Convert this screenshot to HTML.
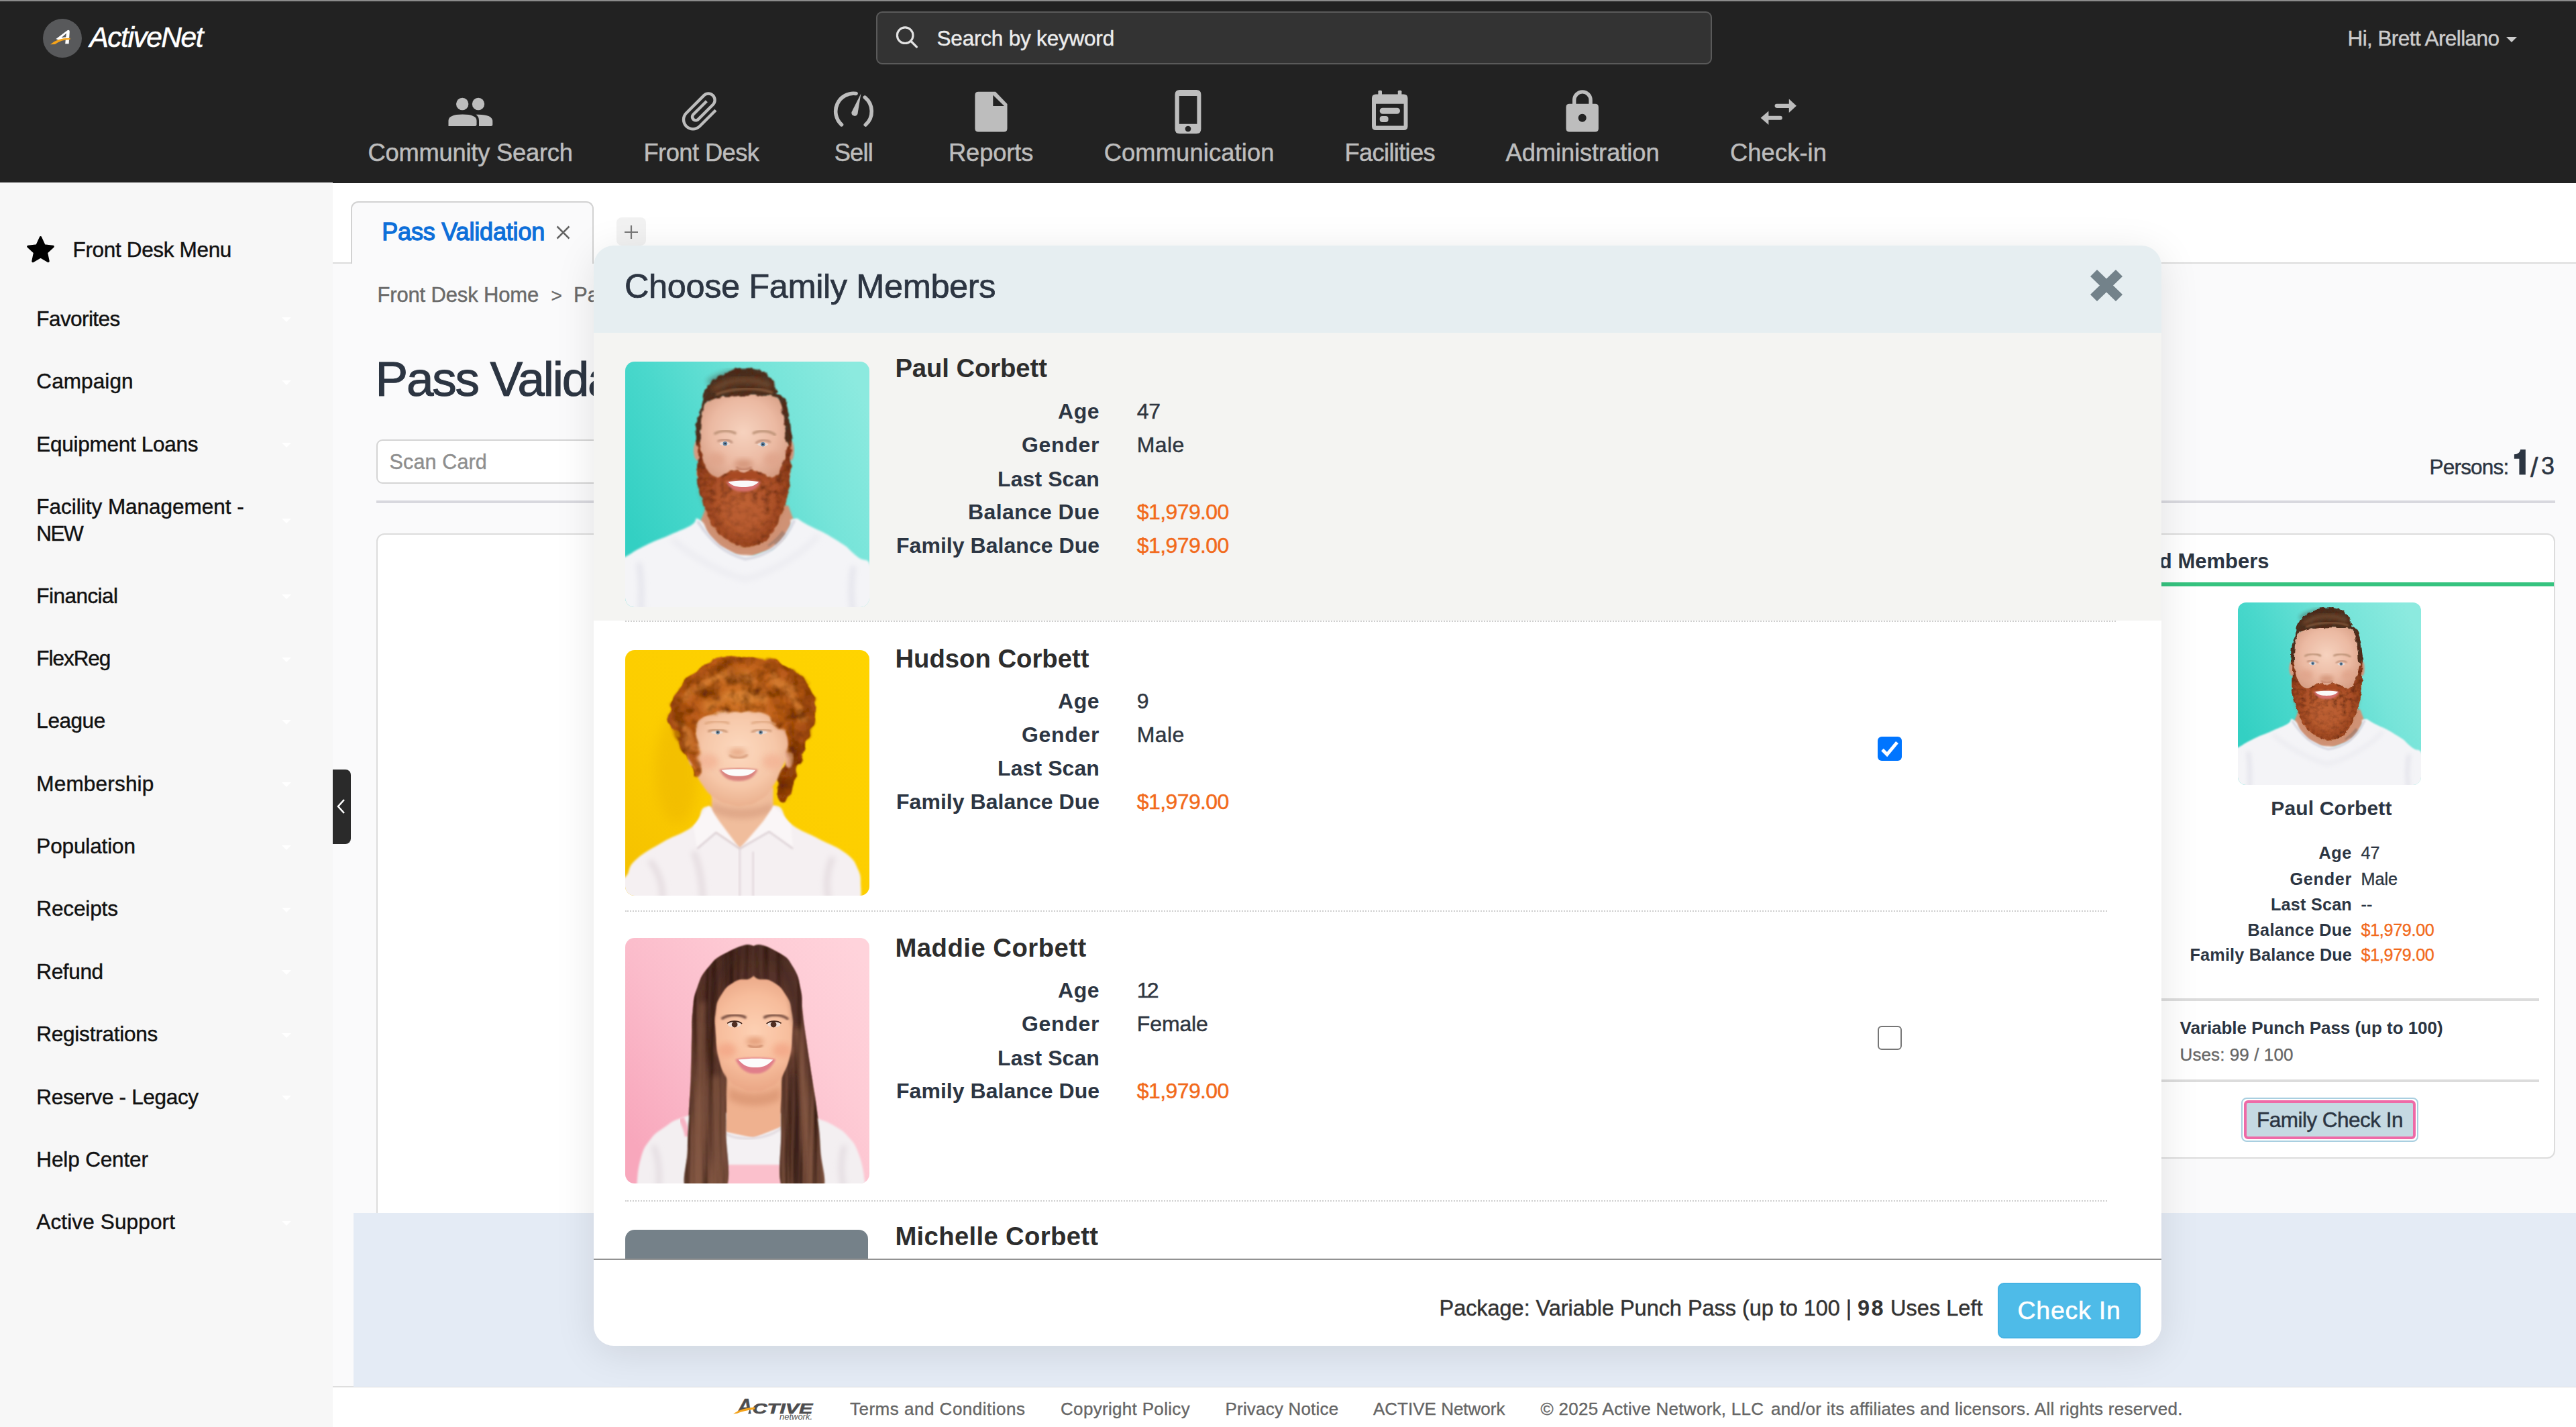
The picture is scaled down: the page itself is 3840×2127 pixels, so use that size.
<!DOCTYPE html>
<html lang="en"><head><meta charset="utf-8"><title>ActiveNet - Pass Validation</title>
<style>
html,body{margin:0;padding:0;}
body{width:3840px;height:2127px;overflow:hidden;background:#fff;font-family:"Liberation Sans",sans-serif;position:relative;}
.t{position:absolute;white-space:pre;line-height:1;}
.b{position:absolute;box-sizing:border-box;}
svg{position:absolute;overflow:visible;}
</style></head><body>
<div class="b" style="left:0;top:0;width:3840px;height:273px;background:#222;"></div>
<div class="b" style="left:0;top:0;width:3840px;height:1.5px;background:#8c8c8c;"></div>
<div class="b" style="left:0;top:272px;width:496px;height:1855px;background:#f7f7f7;"></div>
<div class="b" style="left:496px;top:391px;width:3344px;height:1676px;background:#fafafb;border-top:2px solid #dcdcdc;"></div>
<div class="b" style="left:496px;top:2066px;width:3344px;height:61px;background:#fff;border-top:2px solid #dedede;"></div>
<svg style="left:64px;top:28px" width="58" height="58" viewBox="0 0 58 58"><circle cx="29" cy="29" r="29" fill="#58595b"/><path d="M19.5 30 L36.5 17.2 Q39.5 15.8 39.8 19 L38.6 37.3 L33.2 37.3 L33.8 31.2 Q28 30.8 24 32 Z M34.2 27.6 L35 21.5 L27.5 28.3 Q31 27.4 34.2 27.6Z" fill="#fff" fill-rule="evenodd"/><path d="M11 38.3 Q21 28.4 40.7 28.7 L40.4 30.9 Q27 31 18 38 Z" fill="#f5a31a"/></svg>
<span class="t" style="left:133.5px;top:34.5px;font-size:42.5px;font-style:italic;letter-spacing:-1.49px;-webkit-text-stroke:0.59px;color:#fff;">ActiveNet</span>
<div class="b" style="left:1306px;top:17px;width:1246px;height:79px;background:#333;border:2px solid #5a5a5a;border-radius:9px;"></div>
<svg style="left:1334px;top:38px" width="36" height="36" viewBox="0 0 36 36"><circle cx="15.2" cy="14.7" r="11.8" fill="none" stroke="#e2e2e2" stroke-width="3.2"/><path d="M23.8 23.3 L32.4 31.9" stroke="#e2e2e2" stroke-width="3.4" stroke-linecap="round"/></svg>
<span class="t" style="left:1396.5px;top:41.6px;font-size:31.5px;letter-spacing:-0.20px;-webkit-text-stroke:0.44px;color:#ececec;">Search by keyword</span>
<span class="t" style="left:3499.5px;top:41.8px;font-size:31.5px;letter-spacing:-0.58px;-webkit-text-stroke:0.44px;color:#ccc;">Hi, Brett Arellano</span>
<svg style="left:3736px;top:55px" width="16" height="8" viewBox="0 0 16 8"><path d="M0 0h16l-8 8z" fill="#ccc"/></svg>
<span class="t" style="left:548.6px;top:210.1px;font-size:36.3px;letter-spacing:-0.22px;-webkit-text-stroke:0.51px;color:#bdbdbd;">Community Search</span>
<span class="t" style="left:959.5px;top:210.1px;font-size:36.3px;letter-spacing:-0.56px;-webkit-text-stroke:0.51px;color:#bdbdbd;">Front Desk</span>
<span class="t" style="left:1243.7px;top:210.1px;font-size:36.3px;letter-spacing:-0.81px;-webkit-text-stroke:0.51px;color:#bdbdbd;">Sell</span>
<span class="t" style="left:1414.0px;top:210.1px;font-size:36.3px;letter-spacing:-0.10px;-webkit-text-stroke:0.51px;color:#bdbdbd;">Reports</span>
<span class="t" style="left:1645.7px;top:210.1px;font-size:36.3px;letter-spacing:0.13px;-webkit-text-stroke:0.51px;color:#bdbdbd;">Communication</span>
<span class="t" style="left:2004.5px;top:210.1px;font-size:36.3px;letter-spacing:-0.67px;-webkit-text-stroke:0.51px;color:#bdbdbd;">Facilities</span>
<span class="t" style="left:2244.5px;top:210.1px;font-size:36.3px;letter-spacing:-0.07px;-webkit-text-stroke:0.51px;color:#bdbdbd;">Administration</span>
<span class="t" style="left:2579.0px;top:210.1px;font-size:36.3px;letter-spacing:0.10px;-webkit-text-stroke:0.51px;color:#bdbdbd;">Check-in</span>
<svg style="left:0;top:0" width="3840" height="272" viewBox="0 0 3840 272"><g fill="#bdbdbd"><circle cx="689.2" cy="155" r="9.2"/><circle cx="713" cy="155" r="9.2"/><path d="M668.5 188 V180 Q668.5 170.5 689.5 170.5 Q710.5 170.5 710.5 180 V185.5 Q710.5 188 708 188 H671 Q668.5 188 668.5 188Z"/><path d="M714 188 V180 Q714 174 709.5 170.8 Q734.3 170 734.3 181 V185.5 Q734.3 188 731.8 188Z"/><path d="M1458.4 136.8 H1484 L1501.5 155 V191.6 Q1501.5 196.6 1496.5 196.6 H1458.4 Q1453.4 196.6 1453.4 191.6 V141.8 Q1453.4 136.8 1458.4 136.8Z M1480.3 141.7 V158 H1497Z" fill-rule="evenodd"/><path d="M1758.5 134.1 H1783.4 Q1790.4 134.1 1790.4 141.1 V192.3 Q1790.4 199.3 1783.4 199.3 H1758.5 Q1751.5 199.3 1751.5 192.3 V141.1 Q1751.5 134.1 1758.5 134.1Z M1757.8 143.1 V184.7 H1784.4 V143.1Z M1771 187.7 a4.3 4.3 0 1 0 0.01 0Z" fill-rule="evenodd"/><path d="M2051 140.4 H2092.5 Q2098.5 140.4 2098.5 146.4 V188 Q2098.5 194 2092.5 194 H2051 Q2045 194 2045 188 V146.4 Q2045 140.4 2051 140.4Z M2051 154.8 V187.4 H2092.6 V154.8Z" fill-rule="evenodd"/><rect x="2054.4" y="134.8" width="5.6" height="9" rx="1.5"/><rect x="2083.8" y="134.8" width="5.6" height="9" rx="1.5"/><rect x="2056.7" y="160.8" width="30.3" height="8.9" rx="4.4"/><rect x="2056.7" y="173" width="12.9" height="9" rx="4"/><path d="M2339.5 154.8 H2377.9 Q2382.9 154.8 2382.9 159.8 V191.6 Q2382.9 196.6 2377.9 196.6 H2339.5 Q2334.5 196.6 2334.5 191.6 V159.8 Q2334.5 154.8 2339.5 154.8Z M2358.7 169.7 a6 6 0 1 0 0.01 0Z" fill-rule="evenodd"/><path d="M2666.8 147.6 L2677.9 157.8 L2666.8 168 V160.9 H2648.6 a3.05 3.05 0 0 1 0 -6.1 H2666.8Z"/><path d="M2636.4 165.5 L2624.6 175.7 L2636.4 186 V178.8 H2653.8 a3.05 3.05 0 0 0 0 -6.1 H2636.4Z"/></g><path d="M2346.7 157 V149.1 a12.2 12.2 0 0 1 24.4 0 V157" fill="none" stroke="#bdbdbd" stroke-width="5.4"/><g transform="translate(1044.5 166.9) rotate(45) scale(2.95) translate(-12.5 -12)" fill="#bdbdbd"><path d="M16.5 6v11.5c0 2.21-1.79 4-4 4s-4-1.79-4-4V5c0-1.38 1.12-2.5 2.5-2.5s2.5 1.12 2.5 2.5v10.5c0 .55-.45 1-1 1s-1-.45-1-1V6H10v9.5c0 1.38 1.12 2.5 2.5 2.5s2.5-1.12 2.5-2.5V5c0-2.21-1.79-4-4-4S7 2.79 7 5v12.5c0 3.04 2.46 5.5 5.5 5.5s5.5-2.46 5.5-5.5V6h-1.5z"/></g><path d="M1254.5 185.85 A26.8 26.8 0 0 1 1276.1 139.45" fill="none" stroke="#bdbdbd" stroke-width="5.6" stroke-linecap="round"/><path d="M1289.3 145.1 A26.8 26.8 0 0 1 1290.3 186" fill="none" stroke="#bdbdbd" stroke-width="5.6" stroke-linecap="round"/><path d="M1283.4 139.6 L1278.4 170 A4.7 4.7 0 0 1 1269.5 167.1 Z" fill="#bdbdbd"/></svg>
<svg style="left:0;top:0" width="120" height="420" viewBox="0 0 120 420"><path d="M60.5 353.9 L66.0 366.0 L79.1 367.4 L69.3 376.4 L72.0 389.4 L60.5 382.8 L49.0 389.4 L51.7 376.4 L41.9 367.4 L55.0 366.0Z" fill="#000" stroke="#000" stroke-width="3.5" stroke-linejoin="round"/></svg>
<span class="t" style="left:108.5px;top:356.5px;font-size:31.5px;letter-spacing:-0.34px;-webkit-text-stroke:0.44px;color:#111;">Front Desk Menu</span>
<span class="t" style="left:54.3px;top:459.7px;font-size:31.5px;letter-spacing:-0.58px;-webkit-text-stroke:0.44px;color:#111;">Favorites</span>
<svg style="left:420px;top:473px" width="14" height="7" viewBox="0 0 14 7"><path d="M0 0h14l-7 7z" fill="#fff"/></svg>
<span class="t" style="left:54.3px;top:553.3px;font-size:31.5px;letter-spacing:0.09px;-webkit-text-stroke:0.44px;color:#111;">Campaign</span>
<svg style="left:420px;top:567px" width="14" height="7" viewBox="0 0 14 7"><path d="M0 0h14l-7 7z" fill="#fff"/></svg>
<span class="t" style="left:54.3px;top:646.5px;font-size:31.5px;letter-spacing:-0.28px;-webkit-text-stroke:0.44px;color:#111;">Equipment Loans</span>
<svg style="left:420px;top:660px" width="14" height="7" viewBox="0 0 14 7"><path d="M0 0h14l-7 7z" fill="#fff"/></svg>
<span class="t" style="left:54.3px;top:739.6px;font-size:31.5px;letter-spacing:-0.02px;-webkit-text-stroke:0.44px;color:#111;">Facility Management -</span>
<span class="t" style="left:54.3px;top:779.5px;font-size:31.5px;letter-spacing:-1.50px;-webkit-text-stroke:0.44px;color:#111;">NEW</span>
<span class="t" style="left:54.3px;top:872.6px;font-size:31.5px;letter-spacing:-0.54px;-webkit-text-stroke:0.44px;color:#111;">Financial</span>
<svg style="left:420px;top:886px" width="14" height="7" viewBox="0 0 14 7"><path d="M0 0h14l-7 7z" fill="#fff"/></svg>
<span class="t" style="left:54.3px;top:965.8px;font-size:31.5px;letter-spacing:-1.04px;-webkit-text-stroke:0.44px;color:#111;">FlexReg</span>
<svg style="left:420px;top:980px" width="14" height="7" viewBox="0 0 14 7"><path d="M0 0h14l-7 7z" fill="#fff"/></svg>
<span class="t" style="left:54.3px;top:1059.2px;font-size:31.5px;letter-spacing:-0.44px;-webkit-text-stroke:0.44px;color:#111;">League</span>
<svg style="left:420px;top:1073px" width="14" height="7" viewBox="0 0 14 7"><path d="M0 0h14l-7 7z" fill="#fff"/></svg>
<span class="t" style="left:54.3px;top:1152.6px;font-size:31.5px;letter-spacing:0.19px;-webkit-text-stroke:0.44px;color:#111;">Membership</span>
<svg style="left:420px;top:1166px" width="14" height="7" viewBox="0 0 14 7"><path d="M0 0h14l-7 7z" fill="#fff"/></svg>
<span class="t" style="left:54.3px;top:1246.0px;font-size:31.5px;letter-spacing:-0.14px;-webkit-text-stroke:0.44px;color:#111;">Population</span>
<svg style="left:420px;top:1260px" width="14" height="7" viewBox="0 0 14 7"><path d="M0 0h14l-7 7z" fill="#fff"/></svg>
<span class="t" style="left:54.3px;top:1339.4px;font-size:31.5px;letter-spacing:-0.13px;-webkit-text-stroke:0.44px;color:#111;">Receipts</span>
<svg style="left:420px;top:1353px" width="14" height="7" viewBox="0 0 14 7"><path d="M0 0h14l-7 7z" fill="#fff"/></svg>
<span class="t" style="left:54.3px;top:1432.8px;font-size:31.5px;letter-spacing:-0.36px;-webkit-text-stroke:0.44px;color:#111;">Refund</span>
<svg style="left:420px;top:1446px" width="14" height="7" viewBox="0 0 14 7"><path d="M0 0h14l-7 7z" fill="#fff"/></svg>
<span class="t" style="left:54.3px;top:1526.2px;font-size:31.5px;letter-spacing:-0.24px;-webkit-text-stroke:0.44px;color:#111;">Registrations</span>
<svg style="left:420px;top:1540px" width="14" height="7" viewBox="0 0 14 7"><path d="M0 0h14l-7 7z" fill="#fff"/></svg>
<span class="t" style="left:54.3px;top:1619.6px;font-size:31.5px;letter-spacing:-0.34px;-webkit-text-stroke:0.44px;color:#111;">Reserve - Legacy</span>
<svg style="left:420px;top:1633px" width="14" height="7" viewBox="0 0 14 7"><path d="M0 0h14l-7 7z" fill="#fff"/></svg>
<span class="t" style="left:54.3px;top:1713.0px;font-size:31.5px;letter-spacing:-0.14px;-webkit-text-stroke:0.44px;color:#111;">Help Center</span>
<span class="t" style="left:54.3px;top:1806.4px;font-size:31.5px;letter-spacing:0.14px;-webkit-text-stroke:0.44px;color:#111;">Active Support</span>
<svg style="left:420px;top:1820px" width="14" height="7" viewBox="0 0 14 7"><path d="M0 0h14l-7 7z" fill="#fff"/></svg>
<svg style="left:420px;top:773px" width="14" height="7" viewBox="0 0 14 7"><path d="M0 0h14l-7 7z" fill="#fff"/></svg>
<div class="b" style="left:496px;top:1147px;width:27px;height:111px;background:#2a2a2a;border-radius:0 8px 8px 0;"></div>
<svg style="left:501px;top:1190px" width="14" height="24" viewBox="0 0 14 24"><path d="M12 2 L3 12 L12 22" fill="none" stroke="#fff" stroke-width="2.5"/></svg>
<div class="b" style="left:523px;top:300px;width:362px;height:93px;background:#fafafb;border:2px solid #d2d2d2;border-bottom:none;border-radius:11px 11px 0 0;"></div>
<span class="t" style="left:569.2px;top:327.7px;font-size:36px;letter-spacing:-0.17px;color:#0d6fd9;-webkit-text-stroke:1.3px #0d6fd9;">Pass Validation</span>
<svg style="left:829px;top:336px" width="21" height="21" viewBox="0 0 21 21"><path d="M1.5 1.5L19.5 19.5M19.5 1.5L1.5 19.5" stroke="#666" stroke-width="2.5" fill="none"/></svg>
<div class="b" style="left:919px;top:324px;width:44px;height:42px;background:#f2f2f2;border-radius:8px;"></div>
<svg style="left:931px;top:336px" width="20" height="20" viewBox="0 0 20 20"><path d="M10 0V20M0 10H20" stroke="#777" stroke-width="2.2" fill="none"/></svg>
<span class="t" style="left:562.5px;top:424.3px;font-size:31px;letter-spacing:-0.16px;-webkit-text-stroke:0.43px;color:#6a6a6a;">Front Desk Home</span>
<span class="t" style="left:821.5px;top:426.8px;font-size:28px;-webkit-text-stroke:0.39px;color:#6a6a6a;">&gt;</span>
<span class="t" style="left:855.0px;top:424.3px;font-size:31px;-webkit-text-stroke:0.43px;color:#6a6a6a;">Pass Validation</span>
<span class="t" style="left:559.5px;top:527.9px;font-size:73px;-webkit-text-stroke:1.02px;color:#2c3542;letter-spacing:-2.3px;">Pass Validation</span>
<div class="b" style="left:561px;top:655px;width:700px;height:66px;background:#fff;border:2px solid #d4d4d4;border-radius:9px;"></div>
<span class="t" style="left:580.5px;top:672.6px;font-size:30.5px;letter-spacing:0.15px;-webkit-text-stroke:0.43px;color:#8e8e8e;">Scan Card</span>
<div class="b" style="left:561px;top:746px;width:3248px;height:4px;background:#d8d8de;"></div>
<div class="b" style="left:561px;top:795px;width:2560px;height:1060px;background:#fff;border:2px solid #dcdcdc;border-radius:12px;"></div>
<div class="b" style="left:3100px;top:795px;width:709px;height:932px;background:#fff;border:2px solid #dcdcdc;border-radius:12px;"></div>
<span class="t" style="left:3108.6px;top:821.0px;font-size:31px;font-weight:700;color:#2c3542;">Scanned Members</span>
<div class="b" style="left:3102px;top:868px;width:705px;height:6px;background:#36c37f;"></div>
<svg style="left:3336.0px;top:898.0px;overflow:hidden" width="273" height="272" viewBox="45 35 1332 1339" preserveAspectRatio="none"><defs><clipPath id="c1"><rect x="45" y="35" width="1332" height="1339" rx="59"/></clipPath><filter id="f1" x="-10%" y="-10%" width="120%" height="120%"><feGaussianBlur stdDeviation="5"/></filter><filter id="g1" x="-30%" y="-30%" width="160%" height="160%"><feGaussianBlur stdDeviation="16"/></filter><filter id="h1" x="-40%" y="-40%" width="180%" height="180%"><feGaussianBlur stdDeviation="34"/></filter><filter id="v1" x="-10%" y="-10%" width="120%" height="120%"><feTurbulence type="fractalNoise" baseFrequency="0.03" numOctaves="2" seed="5" result="n"/><feDisplacementMap in="SourceGraphic" in2="n" scale="26" xChannelSelector="R" yChannelSelector="G" result="d"/><feTurbulence type="fractalNoise" baseFrequency="0.03" numOctaves="3" seed="11" result="t"/><feColorMatrix in="t" type="matrix" values="0 0 0 0 0  0 0 0 0 0  0 0 0 0 0  1.8 0 0 0 -0.7" result="ta"/><feFlood flood-color="#5a2510" result="fl"/><feComposite in="fl" in2="ta" operator="in" result="dk"/><feComposite in="dk" in2="d" operator="in" result="dk2"/><feMerge><feMergeNode in="d"/><feMergeNode in="dk2"/></feMerge><feGaussianBlur stdDeviation="3"/></filter><filter id="s1" x="-5%" y="-5%" width="110%" height="110%"><feTurbulence type="fractalNoise" baseFrequency="0.03 0.0012" numOctaves="3" seed="4" result="t"/><feColorMatrix in="t" type="matrix" values="0 0 0 0 0  0 0 0 0 0  0 0 0 0 0  2.6 0 0 0 -1.0" result="ta"/><feFlood flood-color="#351c14" result="fl"/><feComposite in="fl" in2="ta" operator="in" result="dk"/><feComposite in="dk" in2="SourceGraphic" operator="in" result="dk2"/><feMerge><feMergeNode in="SourceGraphic"/><feMergeNode in="dk2"/></feMerge><feGaussianBlur stdDeviation="3.5"/></filter><filter id="w1" x="-10%" y="-10%" width="120%" height="120%"><feTurbulence type="fractalNoise" baseFrequency="0.011" numOctaves="2" seed="3" result="n"/><feDisplacementMap in="SourceGraphic" in2="n" scale="75" xChannelSelector="R" yChannelSelector="G" result="d"/><feTurbulence type="fractalNoise" baseFrequency="0.016" numOctaves="3" seed="8" result="t"/><feColorMatrix in="t" type="matrix" values="0 0 0 0 0  0 0 0 0 0  0 0 0 0 0  2.1 0 0 0 -0.8" result="ta"/><feFlood flood-color="#6a2c08" result="fl"/><feComposite in="fl" in2="ta" operator="in" result="dk"/><feComposite in="dk" in2="d" operator="in" result="dk2"/><feMerge><feMergeNode in="d"/><feMergeNode in="dk2"/></feMerge><feGaussianBlur stdDeviation="3.5"/></filter><linearGradient id="bg1" gradientUnits="userSpaceOnUse" x1="45" y1="900" x2="1377" y2="300"><stop offset="0" stop-color="#33d0c3"/><stop offset=".3" stop-color="#4ad8cc"/><stop offset=".7" stop-color="#76e4d9"/><stop offset="1" stop-color="#8ceadf"/></linearGradient><radialGradient id="sk1" gradientUnits="userSpaceOnUse" cx="690" cy="420" r="300"><stop offset="0" stop-color="#f6d2be"/><stop offset=".6" stop-color="#ebb9a2"/><stop offset="1" stop-color="#d49a80"/></radialGradient><radialGradient id="bd1" gradientUnits="userSpaceOnUse" cx="690" cy="800" r="330"><stop offset="0" stop-color="#bd6034"/><stop offset=".6" stop-color="#aa4f28"/><stop offset="1" stop-color="#86391b"/></radialGradient></defs><g clip-path="url(#c1)"><rect x="0" y="0" width="1427" height="1427" fill="url(#bg1)"/><path d="M490 820L935 820L962 895L900 1040L700 1110L520 1040L455 905Z" fill="#cf9275" filter="url(#f1)"/><path d="M-20 1130C2 1017 -12 1130 45 1100C102 1070 65 1082 150 1040C235 998 217 1012 300 975C383 938 349 956 400 930C451 904 412 875 452 898C492 921 471 946 520 1000C569 1054 540 1030 600 1060C660 1090 633 1085 700 1090C767 1095 740 1095 800 1075C860 1055 833 1072 880 1030C927 988 913 996 940 950C967 904 925 900 962 893C999 886 971 891 1050 930C1129 969 1117 957 1200 1010C1283 1063 1233 1030 1300 1090C1367 1150 1360 1073 1400 1190C1440 1307 1893 1357 1420 1440C947 1523 460 1543 -20 1440C-500 1337 -42 1243 -20 1130Z" fill="#f4f4f7" filter="url(#f1)"/><path d="M440 905 C520 1030 600 1085 700 1112 C800 1100 900 1050 968 900" fill="none" stroke="#d9d9e2" stroke-width="16" filter="url(#f1)"/><path d="M120 1130 C140 1250 130 1340 130 1430 M1290 1150 C1270 1260 1280 1350 1290 1430" stroke="#e2e2ea" stroke-width="26" fill="none" filter="url(#g1)"/><path d="M300 1000 C400 1100 600 1200 700 1220 C800 1200 1000 1100 1100 980" stroke="#ececf1" stroke-width="30" fill="none" filter="url(#g1)"/><ellipse cx="440" cy="520" rx="22" ry="55" fill="#d59a80" filter="url(#f1)"/><ellipse cx="948" cy="520" rx="18" ry="55" fill="#cf9277" filter="url(#f1)"/><path d="M450 420C455 333 439 362 462 300C485 238 474 263 520 235C566 207 540 224 600 215C660 206 633 209 700 208C767 207 743 206 800 212C857 218 832 196 870 225C908 254 895 235 915 300C935 365 923 333 930 420C937 507 945 467 935 560C925 653 978 633 900 700C822 767 840 760 700 760C560 760 564 767 480 700C396 633 458 653 448 560C438 467 445 507 450 420Z" fill="url(#sk1)" filter="url(#f1)"/><g filter="url(#v1)"><path d="M432 480C427 459 429 440 432 400C435 360 435 370 445 330C455 290 458 286 468 250C478 214 467 225 482 195C497 165 494 165 525 138C556 111 553 113 600 95C647 77 649 74 700 72C751 70 750 70 790 88C830 106 828 108 850 138C872 168 857 175 872 200C887 225 892 205 908 232C924 259 921 255 932 300C943 345 943 352 948 400C953 448 956 461 950 480C944 499 935 491 926 470C917 449 924 440 918 400C912 360 914 359 905 320C896 281 897 281 885 255C873 229 883 231 860 222C837 213 843 223 800 222C757 221 753 217 700 218C647 219 648 220 600 226C552 232 552 229 520 242C488 255 495 249 480 275C465 301 469 301 462 340C455 379 458 383 455 420C452 457 458 464 452 480C446 496 437 501 432 480Z" fill="#4b3023"/></g><path d="M520 190 C600 130 720 110 840 170" stroke="#7d5439" stroke-width="26" fill="none" filter="url(#g1)" opacity=".9"/><path d="M540 215 C620 180 760 170 850 205" stroke="#8a5e40" stroke-width="14" fill="none" filter="url(#f1)" opacity=".8"/><path d="M500 150 C560 105 650 85 730 90" stroke="#3f271a" stroke-width="18" fill="none" filter="url(#g1)" opacity=".7"/><g filter="url(#v1)"><path d="M445 470C440 481 442 512 440 560C438 608 435 602 438 650C441 698 439 692 450 740C461 788 461 782 480 830C499 878 493 877 520 920C547 963 545 961 580 990C615 1019 613 1016 650 1030C687 1044 683 1044 720 1042C757 1040 755 1043 790 1022C825 1001 823 1000 850 962C877 924 872 929 892 880C912 831 913 828 926 780C939 732 936 748 942 700C948 652 946 661 947 600C948 539 953 491 947 470C941 449 938 485 925 520C912 555 917 563 900 600C883 637 887 645 860 658C833 671 831 659 800 650C769 641 771 629 742 626C713 623 717 640 690 640C663 640 669 623 640 626C611 629 609 641 580 650C551 659 557 673 530 660C503 647 499 637 480 600C461 563 469 555 460 520C451 485 450 459 445 470Z" fill="url(#bd1)"/></g><ellipse cx="690" cy="880" rx="140" ry="120" fill="#bf6234" filter="url(#h1)" opacity=".55"/><path d="M470 720 C500 860 580 980 690 1020 M910 720 C890 860 810 980 700 1020" stroke="#94421f" stroke-width="30" fill="none" filter="url(#g1)" opacity=".6"/><path d="M560 690 C600 640 660 625 690 645 C720 625 790 640 830 690 C790 672 740 668 690 672 C640 668 600 672 560 690Z" fill="#a84a24" filter="url(#f1)"/><path d="M596 690 C650 678 740 678 784 690 C765 738 720 744 690 744 C660 744 615 738 596 690Z" fill="#d6706d" filter="url(#f1)"/><path d="M606 690 C660 682 730 682 774 690 C750 716 720 719 690 719 C660 719 630 716 606 690Z" fill="#fafafa"/><ellipse cx="690" cy="595" rx="52" ry="26" fill="#d5977c" filter="url(#g1)"/><path d="M650 610 C670 628 710 628 735 610" stroke="#b9765c" stroke-width="8" fill="none" filter="url(#f1)"/><ellipse cx="540" cy="570" rx="50" ry="40" fill="#e0a48b" filter="url(#g1)" opacity=".8"/><ellipse cx="850" cy="570" rx="50" ry="40" fill="#e0a48b" filter="url(#g1)" opacity=".8"/><ellipse cx="588" cy="482" rx="28" ry="11" fill="#e9d9d3"/><ellipse cx="796" cy="486" rx="28" ry="11" fill="#e9d9d3"/><circle cx="590" cy="482" r="12" fill="#6286a6"/><circle cx="796" cy="486" r="12" fill="#6286a6"/><circle cx="590" cy="482" r="5" fill="#2c3b4a"/><circle cx="796" cy="486" r="5" fill="#2c3b4a"/><path d="M548 470 C575 455 610 458 630 478 M756 480 C780 460 815 460 838 474" stroke="#9a6a52" stroke-width="6" fill="none" filter="url(#f1)"/><path d="M530 430 C570 405 620 410 650 428 M740 428 C770 408 830 408 866 436" stroke="#b88e72" stroke-width="12" fill="none" filter="url(#f1)"/><path d="M825 1040 C850 1020 880 1000 905 960 M860 1030 C880 1015 900 990 915 968" stroke="#6d625f" stroke-width="6" fill="none" opacity=".75" filter="url(#f1)"/></g></svg>
<span class="t" style="left:3385.2px;top:1189.7px;font-size:30px;font-weight:700;letter-spacing:0.18px;color:#2c3542;">Paul Corbett</span>
<span class="t" style="left:3456.5px;top:1259.2px;font-size:25.2px;font-weight:700;letter-spacing:0.64px;color:#2c3542;">Age</span>
<span class="t" style="left:3519.5px;top:1259.2px;font-size:25.2px;-webkit-text-stroke:0.35px;color:#2c3542;">47</span>
<span class="t" style="left:3413.5px;top:1297.8px;font-size:25.2px;font-weight:700;letter-spacing:0.72px;color:#2c3542;">Gender</span>
<span class="t" style="left:3519.5px;top:1297.8px;font-size:25.2px;-webkit-text-stroke:0.35px;color:#2c3542;">Male</span>
<span class="t" style="left:3385.0px;top:1336.1px;font-size:25.2px;font-weight:700;letter-spacing:0.22px;color:#2c3542;">Last Scan</span>
<span class="t" style="left:3519.5px;top:1336.1px;font-size:25.2px;-webkit-text-stroke:0.35px;color:#2c3542;">--</span>
<span class="t" style="left:3350.5px;top:1373.7px;font-size:25.2px;font-weight:700;letter-spacing:0.39px;color:#2c3542;">Balance Due</span>
<span class="t" style="left:3519.5px;top:1373.7px;font-size:25.2px;letter-spacing:-0.34px;-webkit-text-stroke:0.35px;color:#f26a1b;">$1,979.00</span>
<span class="t" style="left:3264.5px;top:1411.3px;font-size:25.2px;font-weight:700;letter-spacing:0.20px;color:#2c3542;">Family Balance Due</span>
<span class="t" style="left:3519.5px;top:1411.3px;font-size:25.2px;letter-spacing:-0.34px;-webkit-text-stroke:0.35px;color:#f26a1b;">$1,979.00</span>
<div class="b" style="left:3200px;top:1488px;width:585px;height:4px;background:#dcdcdc;"></div>
<span class="t" style="left:3249.5px;top:1519.4px;font-size:26px;font-weight:700;letter-spacing:-0.03px;color:#2c3542;">Variable Punch Pass (up to 100)</span>
<span class="t" style="left:3249.5px;top:1559.4px;font-size:26px;letter-spacing:0.10px;-webkit-text-stroke:0.36px;color:#666;">Uses: 99 / 100</span>
<div class="b" style="left:3200px;top:1609px;width:585px;height:4px;background:#dcdcdc;"></div>
<div class="b" style="left:3341px;top:1636px;width:264px;height:66px;background:#fff;border:2px solid #a9cfe0;border-radius:8px;"></div>
<div class="b" style="left:3345px;top:1640px;width:256px;height:58px;background:#c5d9e2;border:4px solid #ee6aa7;border-radius:6px;"></div>
<span class="t" style="left:3364.0px;top:1653.9px;font-size:31.5px;letter-spacing:-0.52px;-webkit-text-stroke:0.44px;color:#2c3542;">Family Check In</span>
<span class="t" style="left:3621.5px;top:681.3px;font-size:31.5px;letter-spacing:-0.79px;-webkit-text-stroke:0.44px;color:#2c3542;">Persons:</span>
<svg style="left:0;top:0" width="3840" height="720" viewBox="0 0 3840 720"><path d="M3757.2 670 H3764.8 V707.5 H3755.4 V683.7 H3747.9 V677.3 C3753 677 3756.5 674.5 3757.2 670 Z" fill="#2c3542"/></svg>
<span class="t" style="left:3772.0px;top:677.3px;font-size:41px;-webkit-text-stroke:0.57px;color:#2c3542;">/</span>
<span class="t" style="left:3788.0px;top:676.7px;font-size:36px;-webkit-text-stroke:0.50px;color:#2c3542;">3</span>
<div class="b" style="left:527px;top:1808px;width:3313px;height:259px;background:#e4ebf5;"></div>
<svg style="left:1090px;top:2078px" width="130" height="46" viewBox="0 0 130 46"><text x="9" y="28.5" font-family="Liberation Sans, sans-serif" font-weight="700" font-style="italic" font-size="31" fill="#4d4d4f" stroke="#4d4d4f" stroke-width=".5">A</text><text x="31.5" y="28.5" font-family="Liberation Sans, sans-serif" font-weight="700" font-style="italic" font-size="22" fill="#4d4d4f" stroke="#4d4d4f" stroke-width=".6" textLength="90" lengthAdjust="spacingAndGlyphs">CTIVE</text><path d="M2 30.2 Q17 25 27.5 23 L24.5 31 L2 31 Z" fill="#fff"/><path d="M3 29.3 Q15 20.8 35.4 19.6 L35 22.5 Q18 24.8 9 28.7 Z" fill="#f5a31a"/><text x="72" y="38.4" font-family="Liberation Sans, sans-serif" font-style="italic" font-size="12.5" fill="#555" textLength="49" lengthAdjust="spacingAndGlyphs">network.</text></svg>
<span class="t" style="left:1267.0px;top:2086.8px;font-size:26px;letter-spacing:0.50px;-webkit-text-stroke:0.36px;color:#666;">Terms and Conditions</span>
<span class="t" style="left:1581.0px;top:2086.8px;font-size:26px;letter-spacing:0.32px;-webkit-text-stroke:0.36px;color:#666;">Copyright Policy</span>
<span class="t" style="left:1826.5px;top:2086.8px;font-size:26px;letter-spacing:0.19px;-webkit-text-stroke:0.36px;color:#666;">Privacy Notice</span>
<span class="t" style="left:2047.0px;top:2086.8px;font-size:26px;-webkit-text-stroke:0.36px;color:#666;">ACTIVE Network</span>
<span class="t" style="left:2296.6px;top:2086.8px;font-size:26px;letter-spacing:0.28px;-webkit-text-stroke:0.36px;color:#666;">© 2025 Active Network, LLC</span>
<span class="t" style="left:2639.9px;top:2086.8px;font-size:26px;letter-spacing:0.28px;-webkit-text-stroke:0.36px;color:#666;">and/or its affiliates and licensors. All rights reserved.</span>
<div class="b" style="left:885px;top:366px;width:2337px;height:1640px;background:#fff;border-radius:30px;box-shadow:0 10px 60px rgba(0,0,0,.10);overflow:hidden;">
<div class="b" style="left:0;top:0;width:2337px;height:130px;background:#e6eef1;"></div>
<div class="b" style="left:0;top:130px;width:2337px;height:429px;background:#f4f4f2;"></div>
<div class="b" style="left:0;top:1510px;width:2337px;height:2px;background:#929292;"></div>
</div>
<span class="t" style="left:931.0px;top:402.3px;font-size:50.5px;letter-spacing:-0.39px;-webkit-text-stroke:0.71px;color:#2c3542;">Choose Family Members</span>
<svg style="left:3116px;top:402px" width="48" height="47" viewBox="0 0 48 47"><path d="M10 0L24 13.5 38 0 48 10 34 23.5 48 37 38 47 24 33.5 10 47 0 37 14 23.5 0 10z" fill="#73828a"/></svg>
<div class="b" style="left:932px;top:925px;width:2222px;height:0;border-top:2px dotted #cfcfcf;"></div>
<div class="b" style="left:932px;top:1357px;width:2209px;height:0;border-top:2px dotted #cfcfcf;"></div>
<div class="b" style="left:932px;top:1789px;width:2209px;height:0;border-top:2px dotted #cfcfcf;"></div>
<svg style="left:932.0px;top:539.4px;overflow:hidden" width="364" height="366" viewBox="45 35 1332 1339" preserveAspectRatio="none"><defs><clipPath id="c2"><rect x="45" y="35" width="1332" height="1339" rx="51"/></clipPath><filter id="f2" x="-10%" y="-10%" width="120%" height="120%"><feGaussianBlur stdDeviation="5"/></filter><filter id="g2" x="-30%" y="-30%" width="160%" height="160%"><feGaussianBlur stdDeviation="16"/></filter><filter id="h2" x="-40%" y="-40%" width="180%" height="180%"><feGaussianBlur stdDeviation="34"/></filter><filter id="v2" x="-10%" y="-10%" width="120%" height="120%"><feTurbulence type="fractalNoise" baseFrequency="0.03" numOctaves="2" seed="5" result="n"/><feDisplacementMap in="SourceGraphic" in2="n" scale="26" xChannelSelector="R" yChannelSelector="G" result="d"/><feTurbulence type="fractalNoise" baseFrequency="0.03" numOctaves="3" seed="11" result="t"/><feColorMatrix in="t" type="matrix" values="0 0 0 0 0  0 0 0 0 0  0 0 0 0 0  1.8 0 0 0 -0.7" result="ta"/><feFlood flood-color="#5a2510" result="fl"/><feComposite in="fl" in2="ta" operator="in" result="dk"/><feComposite in="dk" in2="d" operator="in" result="dk2"/><feMerge><feMergeNode in="d"/><feMergeNode in="dk2"/></feMerge><feGaussianBlur stdDeviation="3"/></filter><filter id="s2" x="-5%" y="-5%" width="110%" height="110%"><feTurbulence type="fractalNoise" baseFrequency="0.03 0.0012" numOctaves="3" seed="4" result="t"/><feColorMatrix in="t" type="matrix" values="0 0 0 0 0  0 0 0 0 0  0 0 0 0 0  2.6 0 0 0 -1.0" result="ta"/><feFlood flood-color="#351c14" result="fl"/><feComposite in="fl" in2="ta" operator="in" result="dk"/><feComposite in="dk" in2="SourceGraphic" operator="in" result="dk2"/><feMerge><feMergeNode in="SourceGraphic"/><feMergeNode in="dk2"/></feMerge><feGaussianBlur stdDeviation="3.5"/></filter><filter id="w2" x="-10%" y="-10%" width="120%" height="120%"><feTurbulence type="fractalNoise" baseFrequency="0.011" numOctaves="2" seed="3" result="n"/><feDisplacementMap in="SourceGraphic" in2="n" scale="75" xChannelSelector="R" yChannelSelector="G" result="d"/><feTurbulence type="fractalNoise" baseFrequency="0.016" numOctaves="3" seed="8" result="t"/><feColorMatrix in="t" type="matrix" values="0 0 0 0 0  0 0 0 0 0  0 0 0 0 0  2.1 0 0 0 -0.8" result="ta"/><feFlood flood-color="#6a2c08" result="fl"/><feComposite in="fl" in2="ta" operator="in" result="dk"/><feComposite in="dk" in2="d" operator="in" result="dk2"/><feMerge><feMergeNode in="d"/><feMergeNode in="dk2"/></feMerge><feGaussianBlur stdDeviation="3.5"/></filter><linearGradient id="bg2" gradientUnits="userSpaceOnUse" x1="45" y1="900" x2="1377" y2="300"><stop offset="0" stop-color="#33d0c3"/><stop offset=".3" stop-color="#4ad8cc"/><stop offset=".7" stop-color="#76e4d9"/><stop offset="1" stop-color="#8ceadf"/></linearGradient><radialGradient id="sk2" gradientUnits="userSpaceOnUse" cx="690" cy="420" r="300"><stop offset="0" stop-color="#f6d2be"/><stop offset=".6" stop-color="#ebb9a2"/><stop offset="1" stop-color="#d49a80"/></radialGradient><radialGradient id="bd2" gradientUnits="userSpaceOnUse" cx="690" cy="800" r="330"><stop offset="0" stop-color="#bd6034"/><stop offset=".6" stop-color="#aa4f28"/><stop offset="1" stop-color="#86391b"/></radialGradient></defs><g clip-path="url(#c2)"><rect x="0" y="0" width="1427" height="1427" fill="url(#bg2)"/><path d="M490 820L935 820L962 895L900 1040L700 1110L520 1040L455 905Z" fill="#cf9275" filter="url(#f2)"/><path d="M-20 1130C2 1017 -12 1130 45 1100C102 1070 65 1082 150 1040C235 998 217 1012 300 975C383 938 349 956 400 930C451 904 412 875 452 898C492 921 471 946 520 1000C569 1054 540 1030 600 1060C660 1090 633 1085 700 1090C767 1095 740 1095 800 1075C860 1055 833 1072 880 1030C927 988 913 996 940 950C967 904 925 900 962 893C999 886 971 891 1050 930C1129 969 1117 957 1200 1010C1283 1063 1233 1030 1300 1090C1367 1150 1360 1073 1400 1190C1440 1307 1893 1357 1420 1440C947 1523 460 1543 -20 1440C-500 1337 -42 1243 -20 1130Z" fill="#f4f4f7" filter="url(#f2)"/><path d="M440 905 C520 1030 600 1085 700 1112 C800 1100 900 1050 968 900" fill="none" stroke="#d9d9e2" stroke-width="16" filter="url(#f2)"/><path d="M120 1130 C140 1250 130 1340 130 1430 M1290 1150 C1270 1260 1280 1350 1290 1430" stroke="#e2e2ea" stroke-width="26" fill="none" filter="url(#g2)"/><path d="M300 1000 C400 1100 600 1200 700 1220 C800 1200 1000 1100 1100 980" stroke="#ececf1" stroke-width="30" fill="none" filter="url(#g2)"/><ellipse cx="440" cy="520" rx="22" ry="55" fill="#d59a80" filter="url(#f2)"/><ellipse cx="948" cy="520" rx="18" ry="55" fill="#cf9277" filter="url(#f2)"/><path d="M450 420C455 333 439 362 462 300C485 238 474 263 520 235C566 207 540 224 600 215C660 206 633 209 700 208C767 207 743 206 800 212C857 218 832 196 870 225C908 254 895 235 915 300C935 365 923 333 930 420C937 507 945 467 935 560C925 653 978 633 900 700C822 767 840 760 700 760C560 760 564 767 480 700C396 633 458 653 448 560C438 467 445 507 450 420Z" fill="url(#sk2)" filter="url(#f2)"/><g filter="url(#v2)"><path d="M432 480C427 459 429 440 432 400C435 360 435 370 445 330C455 290 458 286 468 250C478 214 467 225 482 195C497 165 494 165 525 138C556 111 553 113 600 95C647 77 649 74 700 72C751 70 750 70 790 88C830 106 828 108 850 138C872 168 857 175 872 200C887 225 892 205 908 232C924 259 921 255 932 300C943 345 943 352 948 400C953 448 956 461 950 480C944 499 935 491 926 470C917 449 924 440 918 400C912 360 914 359 905 320C896 281 897 281 885 255C873 229 883 231 860 222C837 213 843 223 800 222C757 221 753 217 700 218C647 219 648 220 600 226C552 232 552 229 520 242C488 255 495 249 480 275C465 301 469 301 462 340C455 379 458 383 455 420C452 457 458 464 452 480C446 496 437 501 432 480Z" fill="#4b3023"/></g><path d="M520 190 C600 130 720 110 840 170" stroke="#7d5439" stroke-width="26" fill="none" filter="url(#g2)" opacity=".9"/><path d="M540 215 C620 180 760 170 850 205" stroke="#8a5e40" stroke-width="14" fill="none" filter="url(#f2)" opacity=".8"/><path d="M500 150 C560 105 650 85 730 90" stroke="#3f271a" stroke-width="18" fill="none" filter="url(#g2)" opacity=".7"/><g filter="url(#v2)"><path d="M445 470C440 481 442 512 440 560C438 608 435 602 438 650C441 698 439 692 450 740C461 788 461 782 480 830C499 878 493 877 520 920C547 963 545 961 580 990C615 1019 613 1016 650 1030C687 1044 683 1044 720 1042C757 1040 755 1043 790 1022C825 1001 823 1000 850 962C877 924 872 929 892 880C912 831 913 828 926 780C939 732 936 748 942 700C948 652 946 661 947 600C948 539 953 491 947 470C941 449 938 485 925 520C912 555 917 563 900 600C883 637 887 645 860 658C833 671 831 659 800 650C769 641 771 629 742 626C713 623 717 640 690 640C663 640 669 623 640 626C611 629 609 641 580 650C551 659 557 673 530 660C503 647 499 637 480 600C461 563 469 555 460 520C451 485 450 459 445 470Z" fill="url(#bd2)"/></g><ellipse cx="690" cy="880" rx="140" ry="120" fill="#bf6234" filter="url(#h2)" opacity=".55"/><path d="M470 720 C500 860 580 980 690 1020 M910 720 C890 860 810 980 700 1020" stroke="#94421f" stroke-width="30" fill="none" filter="url(#g2)" opacity=".6"/><path d="M560 690 C600 640 660 625 690 645 C720 625 790 640 830 690 C790 672 740 668 690 672 C640 668 600 672 560 690Z" fill="#a84a24" filter="url(#f2)"/><path d="M596 690 C650 678 740 678 784 690 C765 738 720 744 690 744 C660 744 615 738 596 690Z" fill="#d6706d" filter="url(#f2)"/><path d="M606 690 C660 682 730 682 774 690 C750 716 720 719 690 719 C660 719 630 716 606 690Z" fill="#fafafa"/><ellipse cx="690" cy="595" rx="52" ry="26" fill="#d5977c" filter="url(#g2)"/><path d="M650 610 C670 628 710 628 735 610" stroke="#b9765c" stroke-width="8" fill="none" filter="url(#f2)"/><ellipse cx="540" cy="570" rx="50" ry="40" fill="#e0a48b" filter="url(#g2)" opacity=".8"/><ellipse cx="850" cy="570" rx="50" ry="40" fill="#e0a48b" filter="url(#g2)" opacity=".8"/><ellipse cx="588" cy="482" rx="28" ry="11" fill="#e9d9d3"/><ellipse cx="796" cy="486" rx="28" ry="11" fill="#e9d9d3"/><circle cx="590" cy="482" r="12" fill="#6286a6"/><circle cx="796" cy="486" r="12" fill="#6286a6"/><circle cx="590" cy="482" r="5" fill="#2c3b4a"/><circle cx="796" cy="486" r="5" fill="#2c3b4a"/><path d="M548 470 C575 455 610 458 630 478 M756 480 C780 460 815 460 838 474" stroke="#9a6a52" stroke-width="6" fill="none" filter="url(#f2)"/><path d="M530 430 C570 405 620 410 650 428 M740 428 C770 408 830 408 866 436" stroke="#b88e72" stroke-width="12" fill="none" filter="url(#f2)"/><path d="M825 1040 C850 1020 880 1000 905 960 M860 1030 C880 1015 900 990 915 968" stroke="#6d625f" stroke-width="6" fill="none" opacity=".75" filter="url(#f2)"/></g></svg>
<span class="t" style="left:1334.4px;top:530.3px;font-size:38.3px;font-weight:700;letter-spacing:-0.10px;color:#2d2d2d;">Paul Corbett</span>
<span class="t" style="left:1577.0px;top:596.9px;font-size:32px;font-weight:700;letter-spacing:0.52px;color:#2c3542;">Age</span>
<span class="t" style="left:1694.8px;top:596.9px;font-size:32px;letter-spacing:-0.30px;-webkit-text-stroke:0.45px;color:#2f3640;">47</span>
<span class="t" style="left:1523.0px;top:647.2px;font-size:32px;font-weight:700;letter-spacing:0.66px;color:#2c3542;">Gender</span>
<span class="t" style="left:1694.8px;top:647.2px;font-size:32px;letter-spacing:0.41px;-webkit-text-stroke:0.45px;color:#2f3640;">Male</span>
<span class="t" style="left:1487.0px;top:697.5px;font-size:32px;font-weight:700;letter-spacing:0.09px;color:#2c3542;">Last Scan</span>
<span class="t" style="left:1443.0px;top:747.3px;font-size:32px;font-weight:700;letter-spacing:0.36px;color:#2c3542;">Balance Due</span>
<span class="t" style="left:1694.8px;top:747.3px;font-size:32px;letter-spacing:-0.60px;-webkit-text-stroke:0.45px;color:#f26a1b;">$1,979.00</span>
<span class="t" style="left:1336.0px;top:797.3px;font-size:32px;font-weight:700;letter-spacing:0.04px;color:#2c3542;">Family Balance Due</span>
<span class="t" style="left:1694.8px;top:797.3px;font-size:32px;letter-spacing:-0.60px;-webkit-text-stroke:0.45px;color:#f26a1b;">$1,979.00</span>
<svg style="left:932.0px;top:969.2px;overflow:hidden" width="364" height="366" viewBox="47 52 1332 1339" preserveAspectRatio="none"><defs><clipPath id="c3"><rect x="47" y="52" width="1332" height="1339" rx="51"/></clipPath><filter id="f3" x="-10%" y="-10%" width="120%" height="120%"><feGaussianBlur stdDeviation="5"/></filter><filter id="g3" x="-30%" y="-30%" width="160%" height="160%"><feGaussianBlur stdDeviation="16"/></filter><filter id="h3" x="-40%" y="-40%" width="180%" height="180%"><feGaussianBlur stdDeviation="34"/></filter><filter id="v3" x="-10%" y="-10%" width="120%" height="120%"><feTurbulence type="fractalNoise" baseFrequency="0.03" numOctaves="2" seed="5" result="n"/><feDisplacementMap in="SourceGraphic" in2="n" scale="26" xChannelSelector="R" yChannelSelector="G" result="d"/><feTurbulence type="fractalNoise" baseFrequency="0.03" numOctaves="3" seed="11" result="t"/><feColorMatrix in="t" type="matrix" values="0 0 0 0 0  0 0 0 0 0  0 0 0 0 0  1.8 0 0 0 -0.7" result="ta"/><feFlood flood-color="#5a2510" result="fl"/><feComposite in="fl" in2="ta" operator="in" result="dk"/><feComposite in="dk" in2="d" operator="in" result="dk2"/><feMerge><feMergeNode in="d"/><feMergeNode in="dk2"/></feMerge><feGaussianBlur stdDeviation="3"/></filter><filter id="s3" x="-5%" y="-5%" width="110%" height="110%"><feTurbulence type="fractalNoise" baseFrequency="0.03 0.0012" numOctaves="3" seed="4" result="t"/><feColorMatrix in="t" type="matrix" values="0 0 0 0 0  0 0 0 0 0  0 0 0 0 0  2.6 0 0 0 -1.0" result="ta"/><feFlood flood-color="#351c14" result="fl"/><feComposite in="fl" in2="ta" operator="in" result="dk"/><feComposite in="dk" in2="SourceGraphic" operator="in" result="dk2"/><feMerge><feMergeNode in="SourceGraphic"/><feMergeNode in="dk2"/></feMerge><feGaussianBlur stdDeviation="3.5"/></filter><filter id="w3" x="-10%" y="-10%" width="120%" height="120%"><feTurbulence type="fractalNoise" baseFrequency="0.011" numOctaves="2" seed="3" result="n"/><feDisplacementMap in="SourceGraphic" in2="n" scale="75" xChannelSelector="R" yChannelSelector="G" result="d"/><feTurbulence type="fractalNoise" baseFrequency="0.016" numOctaves="3" seed="8" result="t"/><feColorMatrix in="t" type="matrix" values="0 0 0 0 0  0 0 0 0 0  0 0 0 0 0  2.1 0 0 0 -0.8" result="ta"/><feFlood flood-color="#6a2c08" result="fl"/><feComposite in="fl" in2="ta" operator="in" result="dk"/><feComposite in="dk" in2="d" operator="in" result="dk2"/><feMerge><feMergeNode in="d"/><feMergeNode in="dk2"/></feMerge><feGaussianBlur stdDeviation="3.5"/></filter><linearGradient id="bg3" gradientUnits="userSpaceOnUse" x1="47" y1="1388" x2="1377" y2="52"><stop offset="0" stop-color="#f4c000"/><stop offset=".4" stop-color="#fccd00"/><stop offset="1" stop-color="#ffd400"/></linearGradient><radialGradient id="sk3" gradientUnits="userSpaceOnUse" cx="670" cy="600" r="330"><stop offset="0" stop-color="#fcd9bf"/><stop offset=".6" stop-color="#f6c7a8"/><stop offset="1" stop-color="#e8ab88"/></radialGradient><radialGradient id="hr3" gradientUnits="userSpaceOnUse" cx="680" cy="330" r="460"><stop offset="0" stop-color="#d07427"/><stop offset=".6" stop-color="#ba5b1a"/><stop offset="1" stop-color="#964411"/></radialGradient></defs><g clip-path="url(#c3)"><rect x="0" y="0" width="1427" height="1440" fill="url(#bg3)"/><ellipse cx="330" cy="700" rx="120" ry="300" fill="#eeb800" filter="url(#h3)" opacity=".6"/><g filter="url(#w3)"><path d="M440 740C424 761 424 688 400 640C376 592 377 605 350 560C323 515 319 513 300 470C281 427 277 445 280 400C283 355 286 348 310 300C334 252 333 260 370 220C407 180 405 182 450 150C495 118 495 119 540 100C585 81 572 83 620 80C668 77 672 82 720 90C768 98 757 103 800 110C843 117 837 102 880 115C923 128 920 129 960 160C1000 191 999 190 1030 230C1061 270 1060 265 1075 310C1090 355 1089 349 1085 400C1081 451 1075 452 1060 500C1045 548 1046 537 1030 580C1014 623 1012 623 1000 660C988 697 996 683 985 720C974 757 972 765 960 800C948 835 956 831 940 850C924 869 919 874 900 872C881 870 873 872 868 842C863 812 877 835 880 760C883 685 992 613 880 560C768 507 577 512 460 560C343 608 456 719 440 740Z" fill="url(#hr3)"/></g><path d="M-40 1500C-360 1460 -60 1379 -40 1330C-20 1281 14 1320 47 1290C80 1260 53 1244 100 1200C147 1156 175 1144 250 1100C325 1056 362 1056 420 1010C478 964 439 907 500 905C561 903 596 1001 680 1000C764 999 797 900 860 900C923 900 894 958 950 1000C1006 1042 1030 1043 1100 1080C1170 1117 1199 1120 1250 1160C1301 1200 1299 1208 1318 1250C1337 1292 1329 1296 1332 1340C1335 1384 1332 1403 1332 1440C1332 1477 1652 1486 1332 1500C1012 1514 280 1540 -40 1500Z" fill="#f5f0f2" filter="url(#f3)"/><path d="M515 800L855 800L852 1000L672 1135L528 1030Z" fill="#f0bd9c" filter="url(#f3)"/><path d="M520 880 C600 930 760 930 850 880 L850 930 C760 985 600 985 520 930Z" fill="#dca384" filter="url(#g3)" opacity=".8"/><path d="M503 900L420 1012L440 1135L542 1047L672 1135L560 985Z" fill="#faf6f7" filter="url(#f3)"/><path d="M858 900L950 1002L962 1135L832 1042L672 1135L800 985Z" fill="#faf6f7" filter="url(#f3)"/><path d="M440 1135 L542 1047 L672 1135 L832 1042 L962 1135" stroke="#d9cdd2" stroke-width="9" fill="none" filter="url(#f3)"/><path d="M672 1135 V1440 M745 1150 V1440" stroke="#e0d5da" stroke-width="9" fill="none" filter="url(#f3)"/><path d="M180 1200 C260 1300 250 1380 250 1440 M1180 1180 C1130 1290 1150 1380 1160 1440 M420 1150 C460 1250 470 1350 470 1440" stroke="#e4dbdf" stroke-width="30" fill="none" filter="url(#g3)"/><ellipse cx="415" cy="630" rx="24" ry="55" fill="#eeb694" filter="url(#f3)"/><ellipse cx="940" cy="640" rx="24" ry="55" fill="#eeb694" filter="url(#f3)"/><path d="M420 520C400 577 409 546 412 600C415 654 413 643 430 700C447 757 437 742 470 790C503 838 495 828 540 860C585 892 572 883 620 895C668 907 652 908 700 900C748 892 735 900 780 870C825 840 814 851 850 800C886 749 876 754 900 700C924 646 920 674 930 620C940 566 941 580 932 520C923 460 970 465 900 420C830 375 826 373 700 370C574 367 564 365 480 410C396 455 440 463 420 520Z" fill="url(#sk3)" filter="url(#f3)"/><g filter="url(#w3)"><path d="M300 470C292 507 323 515 350 560C377 605 376 591 400 640C424 689 423 729 440 745C457 761 462 739 462 700C462 661 449 648 440 600C431 552 444 568 428 520C412 472 414 433 380 420C346 407 308 433 300 470Z" fill="#b95b1a" filter="url(#f3)"/><path d="M300 470C289 414 279 398 300 330C321 262 321 268 380 215C439 162 435 161 520 130C605 99 599 100 700 100C801 100 809 90 900 130C991 170 992 178 1040 250C1088 322 1080 323 1080 400C1080 477 1072 487 1040 540C1008 593 989 605 960 600C931 595 951 557 930 520C909 483 915 489 880 460C845 431 848 427 800 412C752 397 753 407 700 402C647 397 648 392 600 392C552 392 563 389 520 402C477 415 467 409 440 442C413 475 429 483 418 525C407 567 421 596 400 600C379 604 367 575 340 540C313 505 311 526 300 470Z" fill="url(#hr3)" filter="url(#f3)"/><path d="M380 330 C480 200 640 170 760 210 M470 380 C560 300 700 280 820 330 M840 200 C940 240 1000 330 1010 440 M340 430 C360 500 390 560 420 600" stroke="#e29040" stroke-width="34" fill="none" filter="url(#g3)" opacity=".75"/><path d="M560 130 C600 170 640 200 700 200 M420 260 C470 300 520 320 580 310 M860 300 C900 350 940 430 950 520 M980 560 C960 680 940 780 910 850" stroke="#8c3f10" stroke-width="26" fill="none" filter="url(#g3)" opacity=".65"/><path d="M590 150 C610 120 640 105 680 110" stroke="#6e2f0a" stroke-width="30" fill="none" filter="url(#g3)" opacity=".7"/></g><ellipse cx="548" cy="500" rx="32" ry="10" fill="#eddcd4"/><ellipse cx="790" cy="500" rx="32" ry="10" fill="#eddcd4"/><circle cx="552" cy="500" r="11" fill="#6f8ea6"/><circle cx="786" cy="500" r="11" fill="#6f8ea6"/><circle cx="552" cy="500" r="5" fill="#2c3b4a"/><circle cx="786" cy="500" r="5" fill="#2c3b4a"/><path d="M498 496 C530 480 575 482 605 500 M735 500 C765 482 810 480 845 494" stroke="#a46a45" stroke-width="6" fill="none" filter="url(#f3)"/><path d="M480 455 C520 435 580 438 615 452 M735 452 C770 438 830 436 868 458" stroke="#d59a70" stroke-width="10" fill="none" filter="url(#f3)" opacity=".8"/><ellipse cx="660" cy="610" rx="48" ry="22" fill="#e7a985" filter="url(#g3)"/><path d="M615 625 C640 645 690 645 715 622" stroke="#c98865" stroke-width="8" fill="none" filter="url(#f3)"/><path d="M560 704 C620 694 710 694 770 704 C745 760 700 766 665 766 C630 766 585 760 560 704Z" fill="#d9827e" filter="url(#f3)"/><path d="M572 706 C630 699 700 699 758 706 C730 736 700 739 665 739 C630 739 600 736 572 706Z" fill="#fbfbfb"/><ellipse cx="500" cy="660" rx="55" ry="40" fill="#f3b193" filter="url(#g3)" opacity=".7"/><ellipse cx="850" cy="660" rx="55" ry="40" fill="#f3b193" filter="url(#g3)" opacity=".7"/></g></svg>
<span class="t" style="left:1334.4px;top:962.7px;font-size:38.3px;font-weight:700;letter-spacing:-0.02px;color:#2d2d2d;">Hudson Corbett</span>
<span class="t" style="left:1577.0px;top:1029.0px;font-size:32px;font-weight:700;letter-spacing:0.52px;color:#2c3542;">Age</span>
<span class="t" style="left:1694.8px;top:1029.0px;font-size:32px;-webkit-text-stroke:0.45px;color:#2f3640;">9</span>
<span class="t" style="left:1523.0px;top:1079.0px;font-size:32px;font-weight:700;letter-spacing:0.66px;color:#2c3542;">Gender</span>
<span class="t" style="left:1694.8px;top:1079.0px;font-size:32px;letter-spacing:0.41px;-webkit-text-stroke:0.45px;color:#2f3640;">Male</span>
<span class="t" style="left:1487.0px;top:1129.0px;font-size:32px;font-weight:700;letter-spacing:0.09px;color:#2c3542;">Last Scan</span>
<span class="t" style="left:1336.0px;top:1178.9px;font-size:32px;font-weight:700;letter-spacing:0.04px;color:#2c3542;">Family Balance Due</span>
<span class="t" style="left:1694.8px;top:1178.9px;font-size:32px;letter-spacing:-0.60px;-webkit-text-stroke:0.45px;color:#f26a1b;">$1,979.00</span>
<svg style="left:932.0px;top:1398.0px;overflow:hidden" width="364" height="366" viewBox="45 48 1332 1339" preserveAspectRatio="none"><defs><clipPath id="c4"><rect x="45" y="48" width="1332" height="1339" rx="51"/></clipPath><filter id="f4" x="-10%" y="-10%" width="120%" height="120%"><feGaussianBlur stdDeviation="5"/></filter><filter id="g4" x="-30%" y="-30%" width="160%" height="160%"><feGaussianBlur stdDeviation="16"/></filter><filter id="h4" x="-40%" y="-40%" width="180%" height="180%"><feGaussianBlur stdDeviation="34"/></filter><filter id="v4" x="-10%" y="-10%" width="120%" height="120%"><feTurbulence type="fractalNoise" baseFrequency="0.03" numOctaves="2" seed="5" result="n"/><feDisplacementMap in="SourceGraphic" in2="n" scale="26" xChannelSelector="R" yChannelSelector="G" result="d"/><feTurbulence type="fractalNoise" baseFrequency="0.03" numOctaves="3" seed="11" result="t"/><feColorMatrix in="t" type="matrix" values="0 0 0 0 0  0 0 0 0 0  0 0 0 0 0  1.8 0 0 0 -0.7" result="ta"/><feFlood flood-color="#5a2510" result="fl"/><feComposite in="fl" in2="ta" operator="in" result="dk"/><feComposite in="dk" in2="d" operator="in" result="dk2"/><feMerge><feMergeNode in="d"/><feMergeNode in="dk2"/></feMerge><feGaussianBlur stdDeviation="3"/></filter><filter id="s4" x="-5%" y="-5%" width="110%" height="110%"><feTurbulence type="fractalNoise" baseFrequency="0.03 0.0012" numOctaves="3" seed="4" result="t"/><feColorMatrix in="t" type="matrix" values="0 0 0 0 0  0 0 0 0 0  0 0 0 0 0  2.6 0 0 0 -1.0" result="ta"/><feFlood flood-color="#351c14" result="fl"/><feComposite in="fl" in2="ta" operator="in" result="dk"/><feComposite in="dk" in2="SourceGraphic" operator="in" result="dk2"/><feMerge><feMergeNode in="SourceGraphic"/><feMergeNode in="dk2"/></feMerge><feGaussianBlur stdDeviation="3.5"/></filter><filter id="w4" x="-10%" y="-10%" width="120%" height="120%"><feTurbulence type="fractalNoise" baseFrequency="0.011" numOctaves="2" seed="3" result="n"/><feDisplacementMap in="SourceGraphic" in2="n" scale="75" xChannelSelector="R" yChannelSelector="G" result="d"/><feTurbulence type="fractalNoise" baseFrequency="0.016" numOctaves="3" seed="8" result="t"/><feColorMatrix in="t" type="matrix" values="0 0 0 0 0  0 0 0 0 0  0 0 0 0 0  2.1 0 0 0 -0.8" result="ta"/><feFlood flood-color="#6a2c08" result="fl"/><feComposite in="fl" in2="ta" operator="in" result="dk"/><feComposite in="dk" in2="d" operator="in" result="dk2"/><feMerge><feMergeNode in="d"/><feMergeNode in="dk2"/></feMerge><feGaussianBlur stdDeviation="3.5"/></filter><linearGradient id="bg4" gradientUnits="userSpaceOnUse" x1="45" y1="1100" x2="1377" y2="200"><stop offset="0" stop-color="#f8a7bc"/><stop offset=".35" stop-color="#fbbccb"/><stop offset=".7" stop-color="#fecbd5"/><stop offset="1" stop-color="#ffd3db"/></linearGradient><radialGradient id="sk4" gradientUnits="userSpaceOnUse" cx="750" cy="560" r="330"><stop offset="0" stop-color="#fdd0b3"/><stop offset=".6" stop-color="#f7bd9c"/><stop offset="1" stop-color="#e9a584"/></radialGradient><linearGradient id="hr4" gradientUnits="userSpaceOnUse" x1="0" y1="95" x2="0" y2="1385"><stop offset="0" stop-color="#4c2d25"/><stop offset=".35" stop-color="#653d31"/><stop offset="1" stop-color="#7a513e"/></linearGradient></defs><g clip-path="url(#c4)"><rect x="0" y="0" width="1427" height="1440" fill="url(#bg4)"/><g filter="url(#s4)"><path d="M745 95C670 95 665 99 600 130C535 161 543 159 500 210C457 261 463 256 440 320C417 384 423 375 415 450C407 525 413 507 410 600C407 693 409 693 405 800C401 907 400 893 395 1000C390 1107 387 1083 385 1200C383 1317 194 1376 388 1440C582 1504 919 1504 1112 1440C1305 1376 1116 1317 1110 1200C1104 1083 1103 1107 1090 1000C1077 893 1076 907 1060 800C1044 693 1043 693 1030 600C1017 507 1018 522 1010 450C1002 378 1013 394 1000 330C987 266 992 263 960 210C928 157 937 161 880 130C823 99 820 95 745 95Z" fill="url(#hr4)"/></g><path d="M108 1500C-30 1472 103 1458 108 1400C113 1342 113 1308 130 1250C147 1192 150 1190 180 1150C210 1110 220 1108 260 1080C300 1052 294 1049 350 1030C406 1011 407 1005 500 1000C593 995 633 1010 750 1010C867 1010 918 994 1000 1000C1082 1006 1058 1019 1100 1035C1142 1051 1143 1048 1180 1070C1217 1092 1227 1093 1260 1130C1293 1167 1299 1172 1320 1230C1341 1288 1344 1317 1352 1380C1360 1443 1508 1467 1356 1500C1204 1533 991 1520 700 1520C409 1520 246 1528 108 1500Z" fill="#f3eff1" filter="url(#f4)"/><path d="M200 1180 C240 1280 230 1380 225 1440 M1240 1180 C1210 1290 1230 1380 1240 1440" stroke="#e2dadf" stroke-width="26" fill="none" filter="url(#g4)"/><path d="M350 1030 C365 1060 380 1090 385 1130" stroke="#f7b3c3" stroke-width="30" fill="none" filter="url(#f4)"/><path d="M600 780L900 780L895 1085L745 1140L592 1110Z" fill="#efb18f" filter="url(#f4)"/><path d="M610 860 C680 910 820 910 890 860 L890 930 C820 975 680 975 610 930Z" fill="#d8936f" filter="url(#g4)" opacity=".7"/><path d="M585 1105L745 1142L900 1078L910 1440L590 1440Z" fill="#f4f1f3" filter="url(#f4)"/><path d="M585 1110 C650 1160 820 1150 900 1082" stroke="#e1d9de" stroke-width="12" fill="none" filter="url(#f4)"/><rect x="590" y="1285" width="322" height="160" fill="#fbc0cc" filter="url(#f4)"/><path d="M535 460C526 520 530 488 535 560C540 632 532 625 552 700C572 775 562 760 600 810C638 860 635 846 680 868C725 890 708 884 750 884C792 884 776 890 820 868C864 846 858 860 895 810C932 760 924 775 944 700C964 625 956 632 960 560C964 488 968 520 957 460C946 400 957 412 925 360C893 308 904 316 850 285C796 254 808 255 745 255C682 255 694 254 640 285C586 316 596 308 565 360C534 412 544 400 535 460Z" fill="url(#sk4)" filter="url(#f4)"/><g filter="url(#s4)"><path d="M745 95C711 67 657 103 600 130C543 157 537 166 500 210C463 254 460 264 440 320C420 376 422 385 415 450C408 515 412 518 410 600C408 682 408 707 405 800C402 893 400 907 395 1000C390 1093 387 1097 385 1200C383 1303 341 1384 388 1440C435 1496 537 1519 585 1440C633 1361 594 1226 595 1100C596 974 594 970 590 900C586 830 589 847 580 800C571 753 560 756 550 700C540 644 538 618 535 560C532 502 528 497 535 450C542 403 540 398 565 360C590 322 598 311 640 285C682 259 720 294 745 250C770 206 779 123 745 95Z" fill="url(#hr4)"/></g><g filter="url(#s4)"><path d="M745 95C776 67 830 103 880 130C930 157 932 163 960 210C988 257 988 274 1000 330C1012 386 1003 387 1010 450C1017 513 1018 518 1030 600C1042 682 1046 707 1060 800C1074 893 1078 907 1090 1000C1102 1093 1105 1097 1110 1200C1115 1303 1158 1384 1112 1440C1066 1496 966 1519 915 1440C864 1361 898 1226 895 1100C892 974 896 970 900 900C904 830 900 847 910 800C920 753 933 756 945 700C957 644 957 618 960 560C963 502 965 497 957 450C949 403 950 398 925 360C900 322 892 311 850 285C808 259 770 294 745 250C720 206 714 123 745 95Z" fill="url(#hr4)"/></g><path d="M470 400 C450 700 450 1000 440 1400 M985 540 C1015 800 1040 1100 1050 1400 M540 800 C545 1000 545 1200 540 1400" stroke="#8f614a" stroke-width="30" fill="none" filter="url(#g4)" opacity=".75"/><path d="M640 150 C540 230 500 350 500 520 M850 150 C940 230 975 350 980 520 M960 800 C975 1000 985 1200 990 1400" stroke="#432820" stroke-width="30" fill="none" filter="url(#g4)" opacity=".6"/><path d="M745 100 V180" stroke="#caa38d" stroke-width="6" filter="url(#f4)" opacity=".6"/><path d="M570 490 C610 462 670 462 705 484 M800 484 C835 462 900 462 935 492" stroke="#70463a" stroke-width="13" fill="none" filter="url(#f4)"/><ellipse cx="640" cy="520" rx="36" ry="15" fill="#eedcd5"/><ellipse cx="856" cy="520" rx="36" ry="15" fill="#eedcd5"/><circle cx="642" cy="520" r="16" fill="#4f2e22"/><circle cx="854" cy="520" r="16" fill="#4f2e22"/><path d="M602 514 C622 498 662 498 682 516 M816 516 C836 498 876 498 896 514" stroke="#3c2219" stroke-width="6" fill="none"/><ellipse cx="752" cy="612" rx="48" ry="22" fill="#e39c78" filter="url(#g4)"/><path d="M715 632 C735 648 775 648 795 632" stroke="#c07a5a" stroke-width="8" fill="none" filter="url(#f4)"/><path d="M646 710 C700 698 810 698 866 710 C830 780 790 788 755 788 C720 788 680 780 646 710Z" fill="#e07e8a" filter="url(#f4)"/><path d="M662 712 C720 703 800 703 852 712 C815 750 790 754 755 754 C720 754 695 750 662 712Z" fill="#fcfcfc"/><ellipse cx="600" cy="660" rx="50" ry="38" fill="#f2a182" filter="url(#g4)" opacity=".65"/><ellipse cx="900" cy="660" rx="50" ry="38" fill="#f2a182" filter="url(#g4)" opacity=".65"/></g></svg>
<span class="t" style="left:1334.4px;top:1394.0px;font-size:38.3px;font-weight:700;letter-spacing:0.48px;color:#2d2d2d;">Maddie Corbett</span>
<span class="t" style="left:1577.0px;top:1460.1px;font-size:32px;font-weight:700;letter-spacing:0.52px;color:#2c3542;">Age</span>
<span class="t" style="left:1694.8px;top:1460.1px;font-size:32px;letter-spacing:-2.80px;-webkit-text-stroke:0.45px;color:#2f3640;">12</span>
<span class="t" style="left:1523.0px;top:1510.4px;font-size:32px;font-weight:700;letter-spacing:0.66px;color:#2c3542;">Gender</span>
<span class="t" style="left:1694.8px;top:1510.4px;font-size:32px;letter-spacing:-0.12px;-webkit-text-stroke:0.45px;color:#2f3640;">Female</span>
<span class="t" style="left:1487.0px;top:1560.5px;font-size:32px;font-weight:700;letter-spacing:0.09px;color:#2c3542;">Last Scan</span>
<span class="t" style="left:1336.0px;top:1610.3px;font-size:32px;font-weight:700;letter-spacing:0.04px;color:#2c3542;">Family Balance Due</span>
<span class="t" style="left:1694.8px;top:1610.3px;font-size:32px;letter-spacing:-0.60px;-webkit-text-stroke:0.45px;color:#f26a1b;">$1,979.00</span>
<div class="b" style="left:932px;top:1833px;width:362px;height:43px;background:#758189;border-radius:14px 14px 0 0;"></div>
<span class="t" style="left:1334.4px;top:1824.1px;font-size:38.3px;font-weight:700;letter-spacing:0.32px;color:#2d2d2d;">Michelle Corbett</span>
<div class="b" style="left:2799px;top:1098px;width:36px;height:36px;background:#0075ff;border-radius:6px;"></div>
<svg style="left:2799px;top:1098px" width="36" height="36" viewBox="0 0 36 36"><path d="M7 19.5L14 26.5L29 8.5" fill="none" stroke="#fff" stroke-width="5"/></svg>
<div class="b" style="left:2799px;top:1529px;width:36px;height:36px;background:#fff;border:2.5px solid #767676;border-radius:6px;"></div>
<span class="t" style="left:2145.5px;top:1933.8px;font-size:32.5px;letter-spacing:-0.05px;-webkit-text-stroke:0.46px;color:#333;">Package: Variable Punch Pass (up to 100 | </span>
<span class="t" style="left:2769.0px;top:1933.8px;font-size:32.5px;font-weight:700;letter-spacing:2.42px;color:#333;">98</span>
<span class="t" style="left:2809.0px;top:1933.8px;font-size:32.5px;letter-spacing:0.02px;-webkit-text-stroke:0.46px;color:#333;"> Uses Left</span>
<div class="b" style="left:2978px;top:1912px;width:213px;height:83px;background:#4ebbe8;border:2px solid #45b3e4;border-radius:9px;"></div>
<span class="t" style="left:3007.5px;top:1935.2px;font-size:37.5px;letter-spacing:0.75px;-webkit-text-stroke:0.53px;color:#fff;">Check In</span>
</body></html>
